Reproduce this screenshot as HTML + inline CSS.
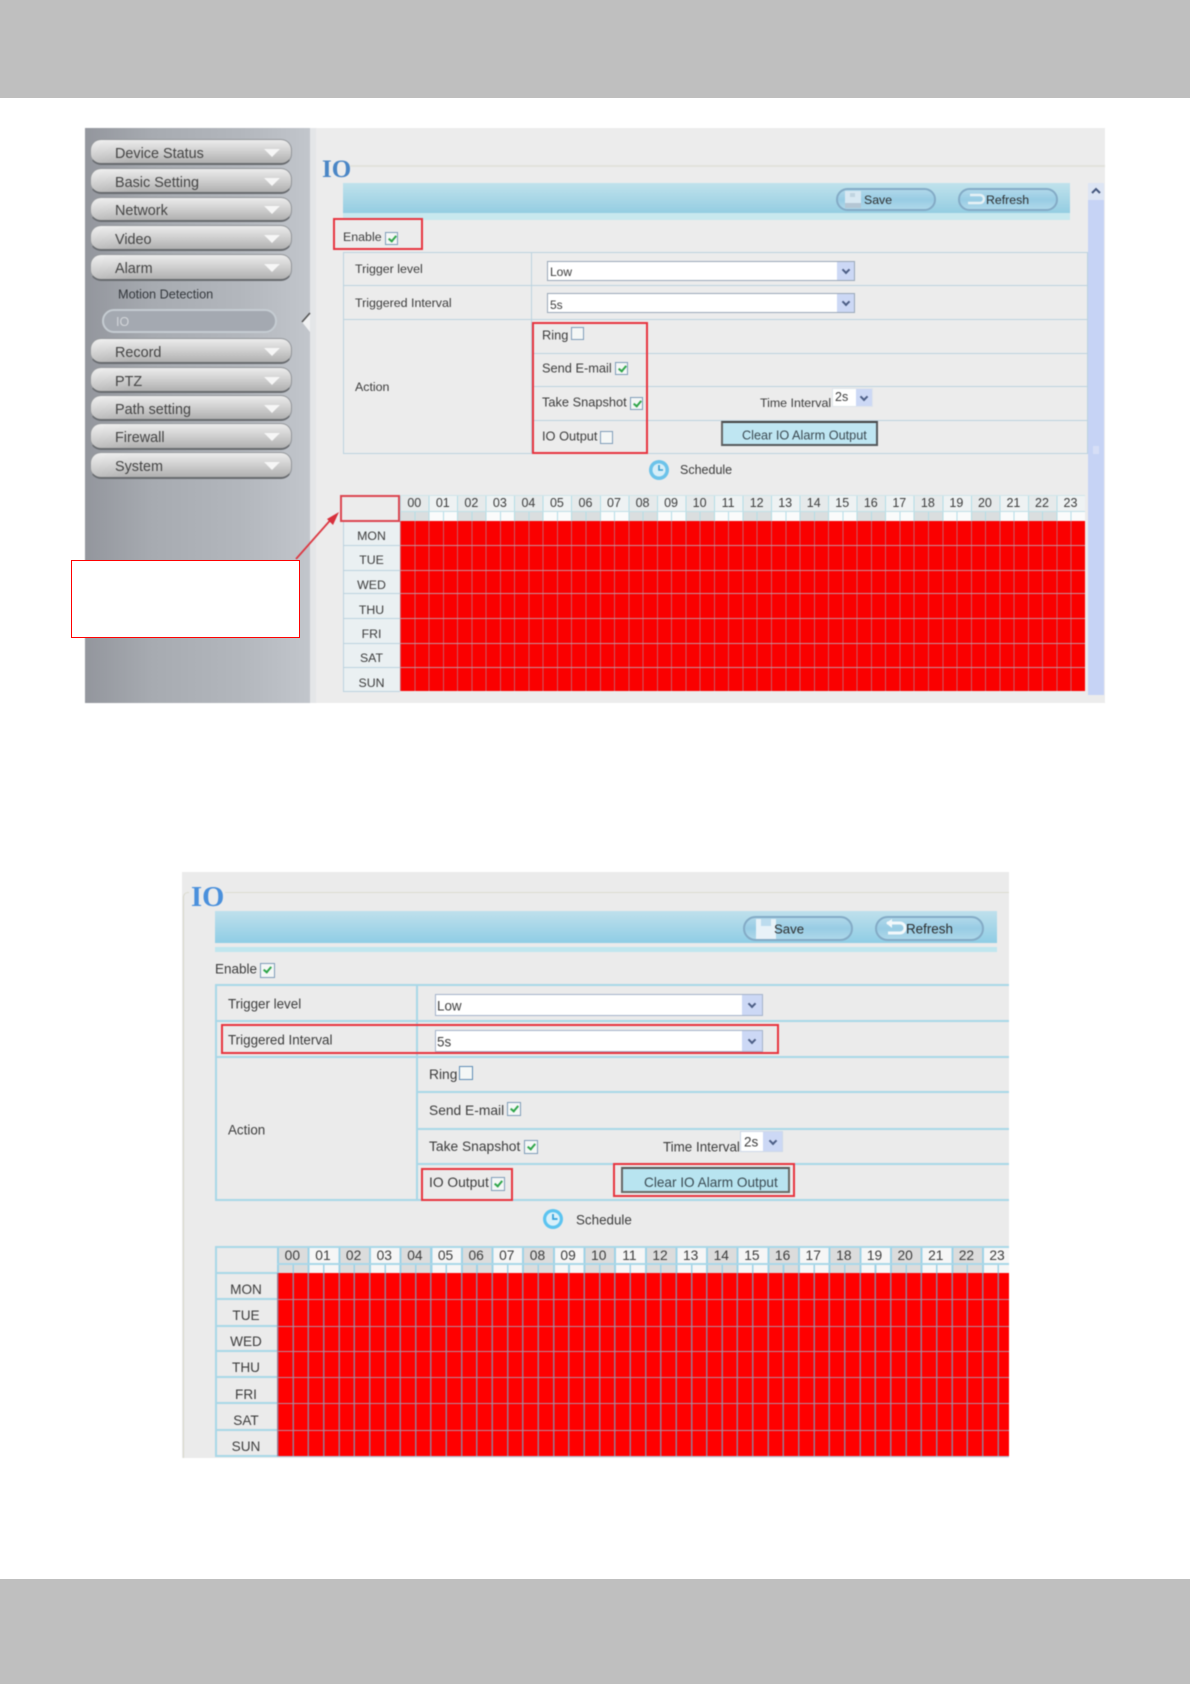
<!DOCTYPE html>
<html lang="en"><head><meta charset="utf-8"><title>IO Alarm</title>
<style>
html,body{margin:0;padding:0;background:#fff}
body{position:relative;width:1190px;height:1684px;overflow:hidden;font-family:"Liberation Sans",sans-serif;color:#3c3c3c}
.a{position:absolute}
.t{position:absolute;white-space:nowrap;transform:translateY(-50%);line-height:1}
.layer{position:absolute;left:0;top:0;width:1190px;height:1684px}
#s1{filter:blur(.55px);font-size:12.4px}
#s2{filter:blur(.5px);font-size:13.4px}
.w1{font-size:12.8px}
.w2{font-size:13.8px}
.m{position:absolute;left:90px;width:202px;border-radius:11px;box-sizing:border-box;border:1px solid #94979b;border-bottom:2px solid #686b6f;background:linear-gradient(90deg,rgba(255,255,255,.2),rgba(255,255,255,0) 20%),linear-gradient(#ececec,#d2d2d2 45%,#b0b0b0)}
.m span{position:absolute;left:24px;top:50%;transform:translateY(-50%);margin-top:2px;font-size:14.4px;color:#444;white-space:nowrap}
.m i{position:absolute;right:11px;top:50%;margin-top:-3px;width:0;height:0;border-left:8px solid transparent;border-right:8px solid transparent;border-top:8px solid #f6f6f6}
.sel{position:absolute;background:#fff;box-sizing:border-box;border:1px solid #9aa8b8}
.sel b{position:absolute;right:0;top:0;bottom:0;background:#ccd8f5}
.sel b:after{content:"";position:absolute;left:50%;top:50%;width:4px;height:4px;margin:-4px 0 0 -3px;border-right:2px solid #4d5f86;border-bottom:2px solid #4d5f86;transform:rotate(45deg)}
.cb{position:absolute;box-sizing:border-box;border:1.5px solid #7f9db9;background:#f4f7f6}
.cb.on:after{content:"";position:absolute;left:32%;top:8%;width:3px;height:6px;border-right:2px solid #2fa64a;border-bottom:2px solid #2fa64a;transform:rotate(40deg)}
.red{position:absolute;box-sizing:border-box;border:2px solid #e8343f}
.hl{position:absolute;height:1px;background:#bcd3df}
.vl{position:absolute;width:1px;background:#bcd3df}
.hl2{position:absolute;height:2px;background:#a9d7e8}
.vl2{position:absolute;width:2px;background:#a9d7e8}
.pill{position:absolute;border-radius:13px;box-sizing:border-box;border:2px solid #84abc6;background:linear-gradient(#b0d8ea,#98cce4 50%,#aed8ea)}
.hrs{position:absolute;left:0;top:0;display:flex}
.hrs span{display:block;text-align:center;flex:none}
.day{position:absolute;text-align:center;transform:translateY(-50%);line-height:1}
.h1{position:absolute}
</style></head>
<body>
<div class="a" style="left:0;top:0;width:1190px;height:98px;background:#bfbfbf"></div>
<div class="a" style="left:0;top:1579px;width:1190px;height:105px;background:#bfbfbf"></div>

<!-- SCREENSHOT 1 -->
<div id="s1" class="layer">
<div class="a" style="left:85px;top:128px;width:1020px;height:575px;background:#ececec"></div>
<div class="a" style="left:85px;top:128px;width:225px;height:575px;background:linear-gradient(90deg,#93969d,#a7abb1 30%,#b3b7bd 70%,#c2c6cc)"></div>
<div class="a" style="left:310px;top:128px;width:6px;height:575px;background:#e4e6e8"></div>

<div class="m" style="top:139px;height:26px"><span>Device Status</span><i></i></div>
<div class="m" style="top:168px;height:26px"><span>Basic Setting</span><i></i></div>
<div class="m" style="top:197px;height:25px"><span>Network</span><i></i></div>
<div class="m" style="top:225px;height:26px"><span>Video</span><i></i></div>
<div class="m" style="top:254px;height:27px"><span>Alarm</span><i></i></div>
<div class="t" style="left:118px;top:295px;font-size:12.7px;color:#33373c">Motion Detection</div>
<div class="a" style="left:102px;top:309px;width:175px;height:24px;box-sizing:border-box;border:2px solid #c5ccd2;border-radius:12px;background:#a4a9b1"></div>
<div class="t" style="left:116px;top:322px;font-size:12.5px;color:#d3d6da">IO</div>
<svg class="a" style="left:300px;top:312px" width="12" height="22"><path d="M10 1 2 10l8 10z" fill="#f0f1f2"/><path d="M10 1 2 10" stroke="#555" stroke-width="1.6" fill="none"/></svg>
<div class="m" style="top:338px;height:26px"><span>Record</span><i></i></div>
<div class="m" style="top:367px;height:26px"><span>PTZ</span><i></i></div>
<div class="m" style="top:395px;height:26px"><span>Path setting</span><i></i></div>
<div class="m" style="top:423px;height:27px"><span>Firewall</span><i></i></div>
<div class="m" style="top:452px;height:27px"><span>System</span><i></i></div>

<div class="a" style="left:350px;top:165px;width:755px;height:2px;background:#e2e2dc"></div>
<div class="t" style="left:322px;top:170px;font:bold 25px 'Liberation Serif',serif;color:#4a86c6">IO</div>
<div class="a" style="left:343px;top:183px;width:727px;height:30px;background:linear-gradient(#c0e2ec,#94cde2)"></div>
<div class="a" style="left:343px;top:213px;width:727px;height:7px;background:#c8e8ee"></div>
<div class="pill" style="left:836px;top:188px;width:100px;height:23px"></div>
<svg class="a" style="left:845px;top:191px" width="16" height="17"><path d="M0 0h16v17H0z" fill="#d8e8f2"/><path d="M5 2h5v4H5z" fill="#c0d4e0"/><path d="M0 12h16v5H0z" fill="#b4c6d4"/></svg>
<div class="t" style="left:864px;top:200px;font-size:12.3px;color:#2e2e2e">Save</div>
<div class="pill" style="left:958px;top:188px;width:100px;height:23px"></div>
<svg class="a" style="left:966px;top:192px" width="20" height="15"><path d="M4 3h10a4 4 0 0 1 0 8H2" stroke="#e6f1f6" stroke-width="2.5" fill="none"/></svg>
<div class="t" style="left:986px;top:200px;font-size:12.3px;color:#2e2e2e">Refresh</div>

<div class="a" style="left:1088px;top:183px;width:16px;height:512px;background:#c6d3f5"></div>
<div class="a" style="left:1088px;top:183px;width:16px;height:17px;background:#dde5f4"></div>
<div class="a" style="left:1093px;top:446px;width:6px;height:8px;background:#d6def6"></div>
<svg class="a" style="left:1090px;top:186px" width="12" height="10"><path d="M2 7l4-4 4 4" stroke="#46587e" stroke-width="2" fill="none"/></svg>

<div class="t" style="left:343px;top:237px">Enable</div>
<div class="cb on" style="left:385px;top:232px;width:13px;height:13px"></div>

<div class="hl" style="left:343px;top:252px;width:745px"></div>
<div class="hl" style="left:343px;top:285px;width:745px"></div>
<div class="hl" style="left:343px;top:319px;width:745px"></div>
<div class="hl" style="left:531px;top:353px;width:557px"></div>
<div class="hl" style="left:531px;top:386px;width:557px"></div>
<div class="hl" style="left:531px;top:420px;width:557px"></div>
<div class="hl" style="left:343px;top:453px;width:745px"></div>
<div class="vl" style="left:343px;top:252px;height:202px"></div>
<div class="vl" style="left:531px;top:252px;height:202px"></div>
<div class="vl" style="left:1087px;top:252px;height:202px"></div>

<div class="t" style="left:355px;top:269px">Trigger level</div>
<div class="t" style="left:355px;top:303px">Triggered Interval</div>
<div class="t" style="left:355px;top:387px">Action</div>
<div class="sel" style="left:547px;top:261px;width:308px;height:20px"><b style="width:17px"></b></div>
<div class="t" style="left:550px;top:272px;font-size:12px">Low</div>
<div class="sel" style="left:547px;top:293px;width:308px;height:20px"><b style="width:17px"></b></div>
<div class="t" style="left:550px;top:305px;font-size:12px">5s</div>

<div class="t w1" style="left:542px;top:336px">Ring</div>
<div class="cb" style="left:571px;top:327px;width:13px;height:13px"></div>
<div class="t w1" style="left:542px;top:369px">Send E-mail</div>
<div class="cb on" style="left:615px;top:362px;width:13px;height:13px"></div>
<div class="t w1" style="left:542px;top:403px">Take Snapshot</div>
<div class="cb on" style="left:630px;top:397px;width:13px;height:13px"></div>
<div class="t" style="left:760px;top:403px">Time Interval</div>
<div class="sel" style="left:832px;top:388px;width:41px;height:19px;border-color:#dfe4ea"><b style="width:16px"></b></div>
<div class="t" style="left:835px;top:397px;font-size:12.5px">2s</div>
<div class="t w1" style="left:542px;top:437px">IO Output</div>
<div class="cb" style="left:600px;top:431px;width:13px;height:13px"></div>
<div class="a" style="left:721px;top:421px;width:157px;height:25px;box-sizing:border-box;background:#bfe6f2;border:2px solid #55595c;border-top-color:#444;border-left-color:#666"></div>
<div class="t" style="left:742px;top:436px;font-size:12.7px;color:#3b4a52">Clear IO Alarm Output</div>
<div class="red" style="left:532px;top:322px;width:116px;height:132px"></div>
<div class="red" style="left:333px;top:218px;width:90px;height:32px"></div>

<svg class="a" style="left:648px;top:459px" width="22" height="22"><circle cx="11" cy="11" r="10" fill="#6cc3ea"/><circle cx="11" cy="11" r="6.5" fill="#d6eef8"/><path d="M11 6v5h4" stroke="#3b9fd0" stroke-width="1.6" fill="none"/></svg>
<div class="t" style="left:680px;top:470px;font-size:12.5px">Schedule</div>

<!-- grid 1 -->
<div class="a" style="left:343px;top:521px;width:57px;height:170px;background:#eaf0f2"></div>
<div class="hl" style="left:343px;top:545px;width:57px"></div>
<div class="hl" style="left:343px;top:570px;width:57px"></div>
<div class="hl" style="left:343px;top:593px;width:57px"></div>
<div class="hl" style="left:343px;top:618px;width:57px"></div>
<div class="hl" style="left:343px;top:643px;width:57px"></div>
<div class="hl" style="left:343px;top:667px;width:57px"></div>
<div class="hl" style="left:343px;top:691px;width:57px"></div>
<div class="vl" style="left:343px;top:521px;height:171px"></div>
<div class="day" style="left:343px;top:536px;width:57px;font-size:12.3px">MON</div>
<div class="day" style="left:343px;top:560px;width:57px;font-size:12.3px">TUE</div>
<div class="day" style="left:343px;top:585px;width:57px;font-size:12.3px">WED</div>
<div class="day" style="left:343px;top:610px;width:57px;font-size:12.3px">THU</div>
<div class="day" style="left:343px;top:634px;width:57px;font-size:12.3px">FRI</div>
<div class="day" style="left:343px;top:658px;width:57px;font-size:12.3px">SAT</div>
<div class="day" style="left:343px;top:683px;width:57px;font-size:12.3px">SUN</div>

<div class="a" style="left:400px;top:495px;width:685px;height:17px;background:repeating-linear-gradient(90deg,#e6eaeb 0 28.54px,#eef2f3 28.54px 57.08px)"></div>
<div class="a" style="left:400px;top:512px;width:685px;height:9px;background:repeating-linear-gradient(90deg,#dadedf 0 28.54px,#fafbfb 28.54px 57.08px)"></div>
<div class="a" style="left:400px;top:495px;width:685px;height:26px;background:repeating-linear-gradient(90deg,#b3dde6 0 1px,transparent 1px 28.54px)"></div>
<div class="a" style="left:400px;top:512px;width:685px;height:9px;background:repeating-linear-gradient(90deg,#b3dde6 0 1px,transparent 1px 14.27px)"></div>
<div class="a" style="left:400px;top:511px;width:685px;height:1px;background:#c0e0e8"></div>
<div class="a" style="left:400px;top:495px;width:685px;height:1px;background:#cfe5ea"></div>
<div class="hrs" style="left:400px;top:496px;font-size:12.5px;line-height:15px">
<span style="width:28.54px">00</span><span style="width:28.54px">01</span><span style="width:28.54px">02</span><span style="width:28.54px">03</span><span style="width:28.54px">04</span><span style="width:28.54px">05</span><span style="width:28.54px">06</span><span style="width:28.54px">07</span><span style="width:28.54px">08</span><span style="width:28.54px">09</span><span style="width:28.54px">10</span><span style="width:28.54px">11</span><span style="width:28.54px">12</span><span style="width:28.54px">13</span><span style="width:28.54px">14</span><span style="width:28.54px">15</span><span style="width:28.54px">16</span><span style="width:28.54px">17</span><span style="width:28.54px">18</span><span style="width:28.54px">19</span><span style="width:28.54px">20</span><span style="width:28.54px">21</span><span style="width:28.54px">22</span><span style="width:28.54px">23</span>
</div>
<div class="a" style="left:400px;top:521px;width:685px;height:170px;background:repeating-linear-gradient(90deg,rgba(170,150,165,.6) 0 1px,transparent 1px 14.27px),#fa0000"></div>
<div class="h1" style="left:400px;top:545px;width:685px;height:1px;background:#c99098"></div>
<div class="h1" style="left:400px;top:570px;width:685px;height:1px;background:#c99098"></div>
<div class="h1" style="left:400px;top:593px;width:685px;height:1px;background:#c99098"></div>
<div class="h1" style="left:400px;top:618px;width:685px;height:1px;background:#c99098"></div>
<div class="h1" style="left:400px;top:643px;width:685px;height:1px;background:#c99098"></div>
<div class="h1" style="left:400px;top:667px;width:685px;height:1px;background:#c99098"></div>
<div class="red" style="left:340px;top:495px;width:60px;height:27px;border-color:#dc4550"></div>
<svg class="a" style="left:290px;top:505px" width="55" height="60"><path d="M6 54 44 11" stroke="#dc3a44" stroke-width="1.8"/><path d="M49 7 37 14l6 6z" fill="#d8303c"/></svg>
</div>

<!-- white annotation box (sharp) -->
<div class="a" style="left:71px;top:560px;width:229px;height:78px;box-sizing:border-box;background:#fff;border:1px solid #f00"></div>

<!-- SCREENSHOT 2 -->
<div id="s2" class="layer">
<div class="a" style="left:182px;top:872px;width:827px;height:586px;background:#ebebeb"></div>
<div class="a" style="left:183px;top:892px;width:826px;height:566px;box-sizing:border-box;border-top:1.5px solid #dcdcd0;border-left:1.5px solid #d6d6c8;border-top-left-radius:5px"></div>
<div class="a" style="left:189px;top:880px;width:36px;height:30px;background:#ebebeb"></div>
<div class="t" style="left:191px;top:898px;font:bold 28.5px 'Liberation Serif',serif;color:#4a90dc">IO</div>
<div class="a" style="left:215px;top:911px;width:782px;height:32px;background:linear-gradient(#bfe0ec,#8fcde5)"></div>
<div class="a" style="left:215px;top:947px;width:782px;height:5px;background:#c0e6ee"></div>
<div class="pill" style="left:743px;top:916px;width:110px;height:25px"></div>
<svg class="a" style="left:755px;top:918px" width="22" height="21"><path d="M1 1h20v20H1z" fill="#e8f2f8"/><path d="M6 1h10v7H6z" fill="#bcdcee"/></svg>
<div class="t" style="left:774px;top:929px;color:#2e2e2e;font-size:13.2px">Save</div>
<div class="pill" style="left:875px;top:916px;width:109px;height:25px"></div>
<svg class="a" style="left:884px;top:919px" width="24" height="19"><path d="M3 4h13a5 5 0 0 1 0 10H4" stroke="#f2f8fb" stroke-width="3" fill="none"/><path d="M8 0 2 4l6 5z" fill="#f2f8fb"/></svg>
<div class="t" style="left:906px;top:929px;color:#2e2e2e;font-size:13.4px">Refresh</div>

<div class="t" style="left:215px;top:969px;font-size:13.5px">Enable</div>
<div class="cb on" style="left:260px;top:963px;width:15px;height:15px"></div>

<div class="hl2" style="left:215px;top:984px;width:794px"></div>
<div class="hl2" style="left:215px;top:1020px;width:794px"></div>
<div class="hl2" style="left:215px;top:1056px;width:794px"></div>
<div class="hl2" style="left:417px;top:1091px;width:592px"></div>
<div class="hl2" style="left:417px;top:1128px;width:592px"></div>
<div class="hl2" style="left:417px;top:1163px;width:592px"></div>
<div class="hl2" style="left:215px;top:1199px;width:794px"></div>
<div class="vl2" style="left:215px;top:984px;height:217px"></div>
<div class="vl2" style="left:416px;top:984px;height:217px"></div>

<div class="t" style="left:228px;top:1004px">Trigger level</div>
<div class="t" style="left:228px;top:1040px">Triggered Interval</div>
<div class="t" style="left:228px;top:1130px">Action</div>
<div class="sel" style="left:435px;top:994px;width:328px;height:22px;border:1.5px solid #a4b3cb"><b style="width:20px"></b></div>
<div class="t" style="left:437px;top:1006px">Low</div>
<div class="sel" style="left:435px;top:1030px;width:328px;height:22px;border:1.5px solid #a4b3cb"><b style="width:20px"></b></div>
<div class="t" style="left:437px;top:1042px">5s</div>

<div class="t w2" style="left:429px;top:1075px">Ring</div>
<div class="cb" style="left:459px;top:1066px;width:14px;height:14px;border-color:#5f8db5"></div>
<div class="t w2" style="left:429px;top:1111px">Send E-mail</div>
<div class="cb on" style="left:507px;top:1102px;width:14px;height:14px"></div>
<div class="t w2" style="left:429px;top:1147px">Take Snapshot</div>
<div class="cb on" style="left:524px;top:1140px;width:14px;height:14px"></div>
<div class="t" style="left:663px;top:1147px">Time Interval</div>
<div class="sel" style="left:740px;top:1131px;width:43px;height:21px;border-color:#cdd8e8"><b style="width:19px"></b></div>
<div class="t" style="left:744px;top:1142px;font-size:13.5px">2s</div>
<div class="t w2" style="left:429px;top:1183px">IO Output</div>
<div class="cb on" style="left:491px;top:1177px;width:14px;height:14px"></div>
<div class="a" style="left:621px;top:1167px;width:169px;height:26px;box-sizing:border-box;background:#b8e4f0;border:2px solid #6a6a66;border-top-color:#555;border-left-color:#666"></div>
<div class="t" style="left:644px;top:1183px;color:#3a4a52;font-size:13.6px">Clear IO Alarm Output</div>
<div class="red" style="left:221px;top:1024px;width:558px;height:30px"></div>
<div class="red" style="left:421px;top:1168px;width:92px;height:33px"></div>
<div class="red" style="left:613px;top:1163px;width:182px;height:34px"></div>

<svg class="a" style="left:542px;top:1208px" width="22" height="22"><circle cx="11" cy="11" r="10" fill="#5cc4f0"/><circle cx="11" cy="11" r="6.8" fill="#d8f0fa"/><path d="M11 6v5h4.5" stroke="#30a0dc" stroke-width="1.7" fill="none"/></svg>
<div class="t" style="left:576px;top:1220px">Schedule</div>

<!-- grid 2 -->
<div class="hl2" style="left:215px;top:1246px;width:62px"></div>
<div class="vl2" style="left:215px;top:1246px;height:211px"></div>
<div class="hl2" style="left:215px;top:1272px;width:62px"></div>
<div class="hl2" style="left:215px;top:1298px;width:62px"></div>
<div class="hl2" style="left:215px;top:1325px;width:62px"></div>
<div class="hl2" style="left:215px;top:1350px;width:62px"></div>
<div class="hl2" style="left:215px;top:1376px;width:62px"></div>
<div class="hl2" style="left:215px;top:1402px;width:62px"></div>
<div class="hl2" style="left:215px;top:1429px;width:62px"></div>
<div class="hl2" style="left:215px;top:1455px;width:62px"></div>
<div class="day" style="left:215px;top:1290px;width:62px;font-size:13.6px">MON</div>
<div class="day" style="left:215px;top:1316px;width:62px;font-size:13.6px">TUE</div>
<div class="day" style="left:215px;top:1342px;width:62px;font-size:13.6px">WED</div>
<div class="day" style="left:215px;top:1368px;width:62px;font-size:13.6px">THU</div>
<div class="day" style="left:215px;top:1395px;width:62px;font-size:13.6px">FRI</div>
<div class="day" style="left:215px;top:1421px;width:62px;font-size:13.6px">SAT</div>
<div class="day" style="left:215px;top:1447px;width:62px;font-size:13.6px">SUN</div>

<div class="a" style="left:277px;top:1246px;width:732px;height:212px;overflow:hidden">
 <div class="a" style="left:0;top:1px;width:736px;height:17px;background:repeating-linear-gradient(90deg,#dcdcdc 0 30.65px,#f6f6f6 30.65px 61.3px)"></div>
 <div class="a" style="left:0;top:18px;width:736px;height:9px;background:repeating-linear-gradient(90deg,#dcdcdc 0 30.65px,#f6f6f6 30.65px 61.3px)"></div>
 <div class="a" style="left:0;top:0;width:736px;height:27px;background:repeating-linear-gradient(90deg,#9fd2e6 0 2px,transparent 2px 30.65px)"></div>
 <div class="a" style="left:0;top:18px;width:736px;height:9px;background:repeating-linear-gradient(90deg,#9fd2e6 0 1.6px,transparent 1.6px 15.325px)"></div>
 <div class="a" style="left:0;top:0;width:736px;height:2px;background:#a9d7e8"></div>
 <div class="a" style="left:0;top:17px;width:736px;height:1.5px;background:#a9d7e8"></div>
 <div class="hrs" style="top:2px;font-size:13.8px;line-height:15px;width:736px">
 <span style="width:30.65px">00</span><span style="width:30.65px">01</span><span style="width:30.65px">02</span><span style="width:30.65px">03</span><span style="width:30.65px">04</span><span style="width:30.65px">05</span><span style="width:30.65px">06</span><span style="width:30.65px">07</span><span style="width:30.65px">08</span><span style="width:30.65px">09</span><span style="width:30.65px">10</span><span style="width:30.65px">11</span><span style="width:30.65px">12</span><span style="width:30.65px">13</span><span style="width:30.65px">14</span><span style="width:30.65px">15</span><span style="width:30.65px">16</span><span style="width:30.65px">17</span><span style="width:30.65px">18</span><span style="width:30.65px">19</span><span style="width:30.65px">20</span><span style="width:30.65px">21</span><span style="width:30.65px">22</span><span style="width:30.65px">23</span>
 </div>
 <div class="a" style="left:0;top:27px;width:736px;height:183px;background:repeating-linear-gradient(90deg,rgba(130,150,180,.8) 0 1.5px,transparent 1.5px 15.325px),#ff0000"></div>
 <div class="h1" style="left:0;top:52.5px;width:736px;height:1.5px;background:#b88a98"></div>
 <div class="h1" style="left:0;top:79.5px;width:736px;height:1.5px;background:#b88a98"></div>
 <div class="h1" style="left:0;top:104.5px;width:736px;height:1.5px;background:#b88a98"></div>
 <div class="h1" style="left:0;top:130.5px;width:736px;height:1.5px;background:#b88a98"></div>
 <div class="h1" style="left:0;top:156.5px;width:736px;height:1.5px;background:#b88a98"></div>
 <div class="h1" style="left:0;top:183.5px;width:736px;height:1.5px;background:#b88a98"></div>
 <div class="h1" style="left:0;top:209.5px;width:736px;height:1.5px;background:#a9c0d4"></div>
</div>
</div>
</body></html>
